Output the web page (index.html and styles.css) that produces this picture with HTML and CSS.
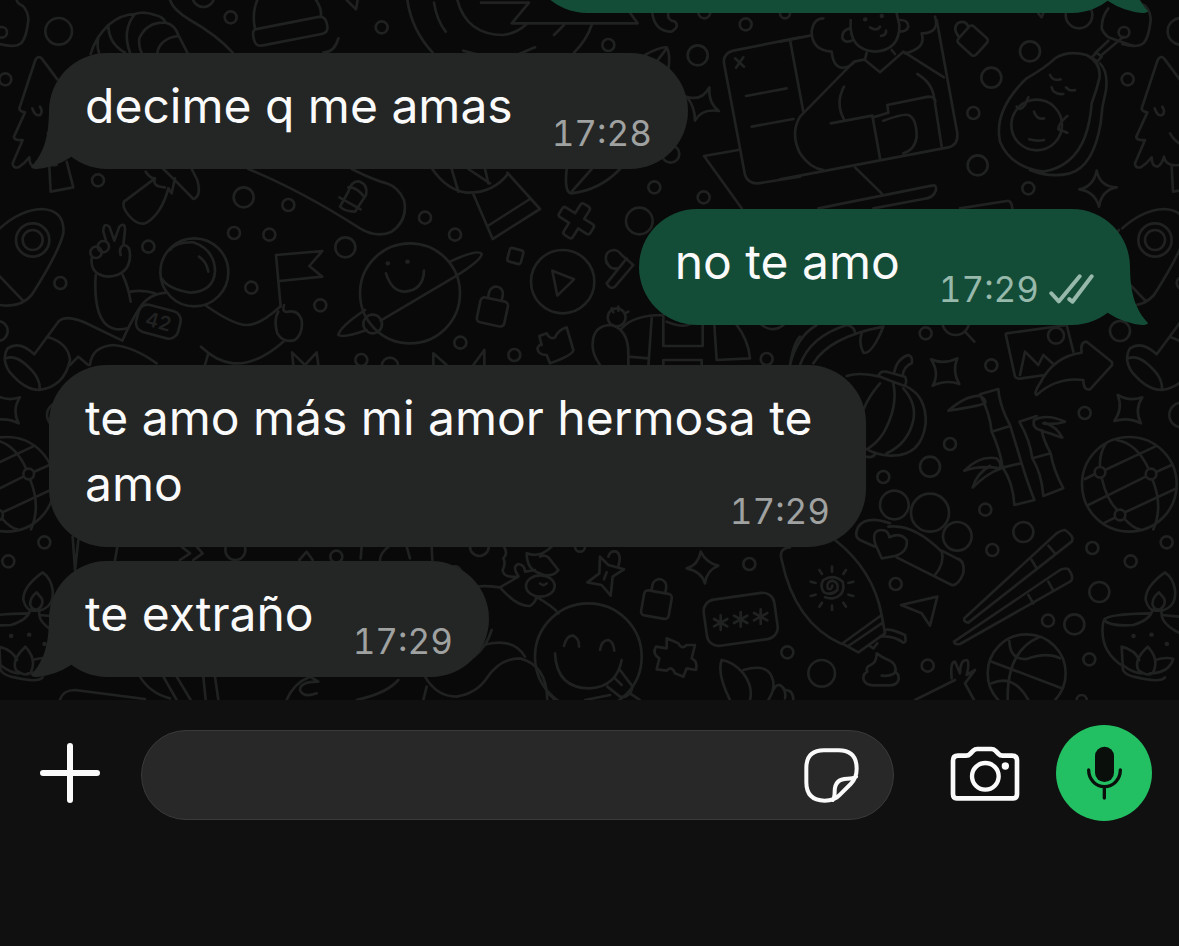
FILE: index.html
```
<!DOCTYPE html>
<html lang="es">
<head>
    <meta charset="UTF-8">
    <meta name="viewport" content="width=device-width, initial-scale=1.0">
    <title>Chat</title>
    <link rel="stylesheet" href="styles.css">
</head>
<body>
    <main class="chat">
        <!-- doodle wallpaper -->
        <svg class="wallpaper" viewBox="0 0 3600 2160" aria-hidden="true">
            <defs>
                <g id="lock">
                    <rect x="-42" y="-34" width="84" height="76" rx="12"/>
                    <path d="M-22 -34V-52A20 20 0 0 1 20 -52V-34"/>
                </g>
                <path id="asterisk" d="M0-22V22M-20-11L20 11M-20 11L20-11"/>
                <path id="tail" d="M18 0C18 30 12 45 0 58Q1 60 6 60Q25 58 40 48L60 20Z"/>
            </defs>

            <!-- this strip repeats on the right edge -->
            <g id="edge">
                <circle cx="5" cy="97" r="16"/>
                <circle cx="176" cy="94" r="40"/>
                <circle cx="16" cy="238" r="18"/>
                <circle cx="181" cy="849" r="18"/>
                <circle cx="-7" cy="993" r="30"/>
                <circle cx="98" cy="720" r="50"/>
                <circle cx="98" cy="720" r="30"/>
                <path d="M50 0Q52 12 68 17Q85 35 85 60Q80 110 65 128Q45 145 0 132"/>
                <path d="M172 238L125 175Q115 165 106 180L58 325Q58 335 75 337L42 410Q42 422 68 420L38 490Q38 505 55 502Q75 490 88 472Q88 500 105 500Q118 495 125 470Q130 500 170 495M143 400Q160 430 185 435M97 325Q105 350 120 345Q130 335 120 320M148 500L152 575L220 562L200 485"/>
                <path d="M0 685Q60 630 125 627Q195 630 190 700Q175 760 95 885Q60 925 0 915M0 830L70 903M-10 690Q-50 730 -20 810L0 830"/>
                <g transform="translate(-1027 1020)">
                    <circle cx="1048" cy="433" r="142"/>
                    <circle cx="960" cy="397" r="16"/>
                    <circle cx="1113" cy="402" r="16"/>
                    <circle cx="1020" cy="525" r="16"/>
                    <circle cx="1160" cy="607" r="18"/>
                    <circle cx="1052" cy="664" r="18"/>
                    <circle cx="1205" cy="225" r="37"/>
                    <path d="M915 417L945 402M975 390L1125 320M925 495L1097 410M1130 395L1175 375M970 550L1005 533M1035 517L1190 445M960 380Q958 340 978 310M1010 300Q1070 310 1105 385M965 413Q980 480 1012 510M1118 420Q1150 500 1120 568M1035 538Q1060 565 1080 568"/>
                    <path d="M1013 165Q1050 185 1087 172Q1062 210 1083 250Q1045 230 1003 243Q1030 205 1013 165Z"/>
                    <path d="M1202-55L1130 43Q1085 0 1050 25Q1030 55 1055 95Q1100 150 1145 150Q1220 140 1237 60Q1232 10 1172-8M1045 55Q1080 40 1130 100Q1150 130 1145 150"/>
                    <path d="M1155 697Q1095 740 1097 780Q1105 810 1125 812H1145Q1190 800 1185 750Q1180 715 1155 697ZM1137 757Q1115 775 1118 795Q1125 812 1140 808Q1160 795 1152 775ZM1117 812Q1110 840 1060 855Q990 860 972 840Q980 822 1110 820M970 845Q955 930 1028 978M1145 815Q1140 850 1200 880M1145 825L1200 830M1028 980Q1025 1000 1060 1010Q1140 1030 1155 1012"/>
                    <path d="M1025 920Q1065 930 1078 960M1025 920L1028 975Q1060 1000 1085 1000M1103 920Q1060 960 1075 990Q1100 1010 1118 1000Q1140 960 1103 920ZM1125 960Q1160 950 1180 957Q1165 1000 1110 1000"/>
                    <path class="dots" d="M1060 888h1M1114 884h1M1160 912h1"/>
                </g>
            </g>
            <use href="#edge" x="3367"/>

            <!-- croissant, hat, astronaut -->
            <g>
                <circle cx="610" cy="-12" r="33"/>
                <circle cx="692" cy="52" r="18"/>
                <circle cx="1145" cy="82" r="18"/>
                <circle cx="294" cy="541" r="18"/>
                <circle cx="731" cy="592" r="30"/>
                <circle cx="865" cy="615" r="18"/>
                <circle cx="702" cy="699" r="18"/>
                <circle cx="808" cy="704" r="18"/>
                <circle cx="445" cy="740" r="18"/>
                <circle cx="754" cy="863" r="18"/>
                <circle cx="961" cy="916" r="18"/>
                <circle cx="1036" cy="742" r="30"/>
                <circle cx="1084" cy="1080" r="18"/>
                <circle cx="1170" cy="1098" r="25"/>
                <path d="M272 162Q285 115 325 75Q365 42 405 42Q430 32 465 45Q490 50 497 68Q525 75 535 105L562 158M295 110Q290 140 297 158M325 75Q325 130 375 158M405 42Q365 90 390 158M497 68Q440 65 418 115Q415 140 425 158M535 108Q480 115 472 158"/>
                <path d="M510 0Q520 30 570 60Q650 105 698 158"/>
                <path d="M765 88Q755 40 772 0M948 0Q965 25 963 48M765 88L960 50Q978 50 982 78Q985 98 965 102L785 137Q765 138 762 118Q755 95 765 88ZM1015 115Q1005 155 970 158M1040 0L1068 28L1073 0"/>
                <path d="M465 535L372 605Q365 620 385 645Q415 680 440 668Q485 640 505 565L515 580L525 535M437 515Q450 535 465 535Q455 560 495 562M490 507Q530 545 580 597Q605 590 592 540L575 507"/>
                <path d="M745 507Q900 570 1080 685Q1130 715 1175 695Q1225 660 1212 600Q1195 562 1160 550Q1120 540 1055 507"/>
                <path d="M1020 620L1045 575Q1055 540 1080 545Q1105 555 1098 585L1065 635Q1035 635 1020 620M1018 592L1082 628M1045 562Q1070 560 1092 590"/>
                <path d="M275 775Q270 825 325 830Q390 825 390 765Q390 735 370 735Q355 745 362 765M343 722L328 680Q310 665 310 695L318 722M343 722L358 680Q375 665 375 690L370 735"/>
                <circle cx="310" cy="740" r="17"/>
                <circle cx="288" cy="757" r="17"/>
                <path d="M287 825Q280 940 320 975Q345 995 382 985M368 825Q385 860 392 905M392 875Q430 868 465 880"/>
                <circle cx="583" cy="817" r="102"/>
                <path d="M485 835Q500 865 570 878Q640 875 645 815Q645 750 580 727Q530 725 510 750M597 770Q620 785 625 815"/>
                <path d="M500 878Q445 880 415 930Q390 970 367 1022L270 975Q200 940 175 965M615 915Q700 975 740 975Q780 975 840 920M850 1025Q770 1095 700 1090Q650 1085 603 1040M625 1060L615 1095"/>
                <g transform="translate(475 965) rotate(15)">
                    <rect x="-65" y="-42" width="130" height="84" rx="28"/>
                    <text x="0" y="21" text-anchor="middle">42</text>
                </g>
                <path d="M842 920L828 765L967 753L928 798L967 830L838 843M835 935Q820 960 832 1000Q850 1030 885 1020Q910 1000 905 960Q895 930 865 935Q845 940 852 915"/>
                <circle cx="1230" cy="880" r="150"/>
                <circle cx="1118" cy="972" r="28"/>
                <path d="M1095 930Q1020 980 1015 1005Q1030 1015 1100 990M1142 962L1365 830Q1445 780 1445 762Q1435 745 1350 785M1158 820Q1175 875 1215 875Q1270 870 1272 812"/>
                <path class="dots" d="M1163 790h1M1222 785h1"/>
                <path d="M880 1095L876 1057L915 1095L950 1057L955 1095"/>
            </g>

            <!-- badge, notebook, play button -->
            <g transform="translate(1200 0)">
                <circle cx="625" cy="135" r="18"/>
                <circle cx="1037" cy="73" r="18"/>
                <circle cx="913" cy="37" r="18"/>
                <circle cx="893" cy="166" r="30"/>
                <circle cx="1155" cy="40" r="15"/>
                <circle cx="812" cy="462" r="26"/>
                <circle cx="763" cy="562" r="18"/>
                <circle cx="911" cy="592" r="18"/>
                <circle cx="75" cy="653" r="18"/>
                <circle cx="165" cy="704" r="18"/>
                <circle cx="718" cy="663" r="40"/>
                <circle cx="181" cy="1028" r="18"/>
                <circle cx="343" cy="1065" r="18"/>
                <circle cx="1100" cy="1077" r="18"/>
                <path d="M22 0Q35 90 98 158M102 8Q110 60 137 95M172 0Q200 105 310 105Q350 100 380 72M243 8H387L335 70H713L690 38M462 105L492 75M575 75Q560 120 522 158M190 152L260 170M405 142L350 165"/>
                <path d="M757 40Q765 95 815 95Q840 80 825 65Q800 60 805 40M735 165Q780 140 800 142Q812 160 805 210M770 185L800 145"/>
                <path d="M928 262Q925 310 957 333Q905 325 885 362Q885 320 860 290Q905 305 928 262Z"/>
                <path d="M1200 112L1000 152Q968 160 972 190L1035 525Q1045 552 1075 550L1200 530M1170 120L1210 335M1038 288L1160 265M1055 380L1180 357M1005 175L1032 200M1030 172L1008 203M1015 450L912 468L1025 625"/>
                <path d="M97 507Q140 570 200 578Q280 580 325 520M155 507L175 575M205 507L270 550M255 507L265 550M220 582L278 717L420 627L322 518M263 678L390 597"/>
                <path d="M500 507Q492 580 515 580Q600 570 660 507M515 575L575 507"/>
                <path transform="translate(529 662) rotate(-58)" d="M-17-15V-47Q-17-55-9-55H9Q17-55 17-47V-15H47Q55-15 55-7V9Q55 17 47 17H17V47Q17 55 9 55H-9Q-17 55-17 47V17H-47Q-55 17-55 9V-7Q-55-15-47-15Z"/>
                <rect x="-21" y="-21" width="42" height="42" rx="8" transform="translate(346 768) rotate(15)"/>
                <circle cx="488" cy="845" r="95"/>
                <path d="M457 812L522 838L472 887Z"/>
                <use href="#lock" transform="translate(278 932) rotate(12)"/>
                <path d="M620 790Q610 755 640 750Q655 750 665 765L700 795L645 860Q630 870 620 850L680 775M620 785Q630 810 650 805"/>
                <path d="M440 1000Q450 1020 465 1012Q475 990 500 982L520 1050Q520 1065 450 1090L440 1065Q415 1065 412 1045Q420 1030 425 1035L418 1008Z"/>
                <circle cx="650" cy="952" r="27"/>
                <path d="M635 925l5 12M655 920v12M685 935l-10 5M600 1095Q575 1060 578 1030Q580 975 635 975Q685 990 685 1060V1095M665 985Q700 945 790 945M755 955L745 1100M790 945V1038H908V970M685 1070L745 1075M790 1100V1080H905V1100M800 965Q850 985 870 972M943 975L950 1080L1050 1075Q1045 1020 1010 975M1085 975Q1120 1000 1150 975M1170 1095Q1180 1030 1200 1010M100 1095V1060L140 1095M220 1095L253 1050V1095"/>
            </g>

            <!-- laptop woman, avocado -->
            <g transform="translate(2340 0)">
                <circle cx="750" cy="154" r="30"/>
                <circle cx="634" cy="233" r="30"/>
                <circle cx="580" cy="339" r="18"/>
                <circle cx="593" cy="496" r="30"/>
                <circle cx="745" cy="565" r="18"/>
                <circle cx="897" cy="45" r="40"/>
                <circle cx="437" cy="1000" r="18"/>
                <circle cx="828" cy="1007" r="24"/>
                <circle cx="527" cy="965" r="40"/>
                <path d="M0 125L90 107M470 60L532 400Q535 435 505 442L0 538"/>
                <path d="M130 55Q100 55 95 95Q95 150 155 155Q160 200 185 203Q205 205 225 185M465 50Q480 100 425 100Q440 145 375 160M212 60Q205 150 285 155Q360 150 358 75L350 40M210 85Q185 90 187 115Q195 130 215 122M360 60Q385 60 385 80Q380 95 360 95M270 82Q290 95 300 80M303 108Q320 105 318 92"/>
                <path class="dots" d="M255 58h1M305 48h1"/>
                <path d="M260 158L255 178L222 185L60 350Q30 400 60 460Q90 505 130 510M335 150L345 162M255 180L300 217L370 155L492 232M192 260Q165 310 192 358M152 370L277 347L300 475M280 352L325 338L322 315L445 290Q470 290 465 310L485 440M412 222Q460 250 463 300M310 362Q370 340 385 345Q410 355 410 410Q405 450 370 460"/>
                <path d="M225 502L305 580M115 625L455 557Q470 552 468 570Q460 595 430 597L280 625M540 625L680 603Q695 600 697 625"/>
                <rect x="-36" y="-34" width="72" height="68" rx="10" transform="translate(578 122) rotate(42)"/>
                <path d="M538 112Q515 85 535 68Q560 60 565 82M775 40L785 52L790 40"/>
                <path d="M985 25Q965 50 965 85Q970 100 985 112L1060 138"/>
                <path d="M985 122L945 160M1030 110L965 165M935 172L950 158L965 170L952 185Z"/>
                <path d="M740 235Q800 200 825 175Q865 150 920 165Q965 190 958 235Q950 270 935 310Q930 370 915 410Q880 500 790 515Q690 500 660 425Q640 330 740 235ZM960 190Q985 215 978 270Q965 320 962 370Q940 500 870 520Q810 535 750 510"/>
                <circle cx="770" cy="375" r="76"/>
                <path d="M810 225Q820 245 842 238M858 262Q870 275 885 270M815 262Q820 285 850 282M710 320Q720 335 735 315L745 292M862 348Q835 370 835 388L862 398M762 335Q770 360 792 355M748 418Q770 425 792 420"/>
                <path d="M950 512Q960 560 1010 562Q965 570 957 620Q945 575 898 568Q940 560 950 512Z"/>
                <path d="M555 995L583 1025M680 1000L860 975L880 1055M30 1095Q50 1010 110 975M60 1095Q90 1010 200 975Q225 980 225 1000M100 1090Q150 1010 310 980Q275 1065 250 1058Q235 1030 245 1000"/>
            </g>

            <!-- lower left corners between bubbles -->
            <g transform="translate(0 1020)">
                <circle cx="706" cy="630" r="30"/>
                <circle cx="1009" cy="650" r="18"/>
                <path d="M210 75L235 50L265 75M270 75Q275 20 340 15Q400 20 470 70M218 590L225 690L235 600M352 620L345 660M545 620L570 640L540 660M590 620L608 640L580 660M898 660L920 635L938 660M1085 620L1082 655M1165 620Q1140 640 1140 660"/>
                <path d="M180 1078Q190 1050 225 1050L435 1077M420 1010Q450 1060 510 1075M490 1010L530 1080M530 1010L572 1080M610 1010L617 1080M645 1010L655 1080M860 1080Q880 1030 930 1010L955 1025Q900 1025 900 1050Q910 1075 950 1060M1070 1080Q1160 1060 1195 1020"/>
            </g>

            <!-- smiley, password card -->
            <g transform="translate(1200 1020)">
                <circle cx="238" cy="620" r="28"/>
                <circle cx="540" cy="620" r="15"/>
                <circle cx="1048" cy="672" r="18"/>
                <path d="M20 620L30 655M95 620L97 660M160 680Q180 675 185 700"/>
                <path d="M312 620Q325 640 310 655Q318 670 308 690Q310 715 355 710L300 742Q240 735 230 742M300 742Q350 800 390 798Q410 785 408 770Q460 800 475 820M355 708Q335 680 355 672Q375 675 375 695L405 690M380 640Q420 655 455 620M380 640Q380 690 420 700Q445 712 465 700L475 690L455 665Q440 640 420 650M420 730Q430 740 440 730"/>
                <ellipse cx="421" cy="738" rx="43" ry="32"/>
                <path d="M600 650L625 675L672 688L638 710L632 767L605 735L562 727L598 700ZM625 650Q630 630 650 635Q665 645 655 680M620 697L612 718"/>
                <use href="#lock" transform="translate(770 790) rotate(10)"/>
                <path d="M902 635Q920 670 955 677Q920 690 915 730Q905 695 860 685Q895 675 902 635Z"/>
                <rect x="-107" y="-70" width="214" height="140" rx="35" transform="translate(1022 838) rotate(-8)"/>
                <use href="#asterisk" x="962" y="848"/>
                <use href="#asterisk" x="1022" y="838"/>
                <use href="#asterisk" x="1082" y="830"/>
                <circle cx="565" cy="950" r="160"/>
                <path d="M492 918Q500 885 520 887Q538 895 537 920M600 930Q605 900 625 900Q640 905 643 932M465 940Q470 1045 570 1045Q650 1040 665 960M622 1040L660 1070Q690 1075 698 1040L660 990M645 1015L665 1035"/>
                <path d="M800 895L835 910Q845 930 860 915L885 915L875 955Q895 965 888 990L860 985L850 1010L825 1000Q815 975 800 992L770 988L778 955Q755 940 768 920L800 925Z"/>
                <path d="M75 1010Q110 1070 170 1070Q230 1060 260 1015Q300 955 360 955Q440 975 442 1080M275 870Q260 920 222 950M250 915Q340 890 375 950M80 1040L70 1080M445 1060L465 1080M555 1080L630 1065M690 1060L720 1080"/>
                <path d="M965 960Q950 1000 990 1080M965 960Q1000 965 1030 1000Q1060 1040 1050 1080M1030 990Q1100 970 1115 1010Q1130 1040 1105 1080M1120 1050Q1135 1020 1155 1050Q1180 1050 1180 1080"/>
            </g>

            <!-- pumpkin, bamboo, sunscreen, chopsticks -->
            <g transform="translate(2340 1020)">
                <circle cx="634" cy="76" r="18"/>
                <circle cx="914" cy="219" r="18"/>
                <circle cx="510" cy="312" r="18"/>
                <circle cx="450" cy="380" r="30"/>
                <circle cx="310" cy="411" r="18"/>
                <circle cx="343" cy="495" r="43"/>
                <circle cx="450" cy="518" r="57"/>
                <circle cx="532" cy="589" r="43"/>
                <circle cx="616" cy="509" r="18"/>
                <circle cx="637" cy="630" r="18"/>
                <circle cx="730" cy="576" r="30"/>
                <circle cx="937" cy="624" r="18"/>
                <circle cx="347" cy="732" r="18"/>
                <circle cx="958" cy="756" r="30"/>
                <circle cx="804" cy="842" r="18"/>
                <circle cx="883" cy="853" r="30"/>
                <circle cx="928" cy="958" r="18"/>
                <circle cx="443" cy="977" r="18"/>
                <circle cx="22" cy="937" r="18"/>
                <circle cx="125" cy="1000" r="40"/>
                <circle cx="905" cy="1080" r="15"/>
                <path d="M200 108Q240 95 300 110M380 140Q440 170 437 250Q425 350 330 347Q290 345 255 325M340 130Q355 200 310 280Q290 310 265 325M370 145Q410 190 400 240Q385 310 320 340M300 130Q265 170 250 210M295 108Q300 92 320 95L375 110Q382 120 375 138Q350 130 295 108M342 100Q350 55 385 45Q400 50 395 70Q370 80 368 108M255 350Q285 355 285 338"/>
                <path d="M453 58Q490 75 532 55Q515 95 538 132Q500 118 458 137Q480 100 453 58Z"/>
                <path d="M600 163L655 147L657 165Q665 210 690 255L725 370Q740 420 763 480L703 495Q700 430 668 382Q660 330 635 275Q630 220 600 163M635 275L690 258M670 382L722 370M505 212Q560 165 600 168Q620 180 615 190Q590 200 505 212M553 392Q600 345 650 355Q665 370 660 385Q600 375 553 392M665 385Q620 400 578 443Q590 400 630 378"/>
                <path d="M770 228L718 245Q750 300 757 355Q785 400 790 468L850 445Q820 390 812 340Q790 300 785 270M757 355L812 340M762 240Q800 220 855 245Q820 255 790 250M762 240Q755 265 785 272Q810 280 847 293Q830 260 795 248"/>
                <path d="M677-18L705 110Q710 118 725 115L795 105M720 105L735 35L775 75L790 45L820 72"/>
                <path d="M770 165Q760 160 780 130Q820 50 905 38Q900 5 920 5L995 65Q1000 75 990 82L930 148Q910 152 910 120Q830 110 770 165Z"/>
                <path d="M330 550Q260 525 235 560Q220 590 240 600L285 620M305 655L285 610Q275 570 305 570Q325 570 328 592Q360 575 380 600Q385 635 345 648ZM325 560Q400 550 485 635M350 652L515 735Q535 738 550 700Q555 660 530 655L485 632Q495 670 465 705"/>
                <path d="M30 622Q-5 625 5 660Q45 850 185 912L305 825Q280 690 165 600M190 912L235 937L315 880L305 825M205 918L305 850M315 870Q330 865 375 885Q380 910 370 908Q340 885 300 890M265 915l15 10l12-15"/>
                <path d="M157 737Q155 752 143 745Q138 725 157 722Q178 727 172 750Q155 768 132 757Q118 738 130 720Q160 700 188 725Q198 765 160 775Q145 776 135 772M156 680v15M156 797v13M118 690l8 12M198 690l-8 12M92 725l15 4M220 725l-15 4M92 768l15-4M220 768l-15-4M118 800l8-12M198 800l-8-12"/>
                <path d="M363 795L472 770L450 857L425 820Z"/>
                <path d="M553 835Q550 845 565 848L875 605Q885 590 855 570Q845 570 830 580ZM755 660L770 685M805 617L825 640M522 905Q525 915 540 912L870 725Q885 715 865 687Q855 683 840 690ZM745 765L760 790M805 725L820 752"/>
                <path d="M290 940Q290 968 272 975Q255 982 262 995Q245 1005 252 1022Q258 1035 280 1036H330Q352 1035 356 1018Q358 1002 345 997Q352 975 330 962Q310 955 290 940ZM305 1007Q345 1010 348 990"/>
                <circle cx="740" cy="1000" r="117"/>
                <path d="M635 965L845 1045M688 903Q690 960 740 957Q800 935 840 955M780 890Q680 930 683 1080M635 1030Q700 1000 745 1080"/>
                <path d="M405 1080L525 1020M515 1015Q510 965 525 965L540 1000Q540 960 560 960Q570 965 560 1005L585 990L555 1030L582 1080M0 1035Q20 1050 15 1075"/>
            </g>
        </svg>

        <div class="messages">
            <div class="bubble out cut">
                <svg class="tail" viewBox="0 0 60 60" aria-hidden="true"><use href="#tail"/></svg>
            </div>
            <div class="bubble in">
                <svg class="tail" viewBox="0 0 60 60" aria-hidden="true"><use href="#tail"/></svg>
                <span>decime q me amas</span>
                <span class="meta"><time>17:28</time></span>
            </div>
            <div class="bubble out">
                <svg class="tail" viewBox="0 0 60 60" aria-hidden="true"><use href="#tail"/></svg>
                <span>no te amo</span>
                <span class="meta">
                    <time>17:29</time>
                    <svg class="ticks" viewBox="0 0 138 92" role="img" aria-label="Entregado">
                        <path d="M7 59L30 84L94 7M62 77L72 85L131 7"/>
                    </svg>
                </span>
            </div>
            <div class="bubble in">
                <span>te amo más mi amor hermosa te amo</span>
                <span class="meta"><time>17:29</time></span>
            </div>
            <div class="bubble in grouped">
                <svg class="tail" viewBox="0 0 60 60" aria-hidden="true"><use href="#tail"/></svg>
                <span>te extraño</span>
                <span class="meta"><time>17:29</time></span>
            </div>
        </div>
    </main>

    <form class="composer">
        <button type="button" class="icon-btn" aria-label="Adjuntar">
            <svg width="60" height="60" viewBox="0 0 60 60"><path d="M30 3V57M3 30H57" stroke-width="6"/></svg>
        </button>
        <div class="field">
            <input type="text" aria-label="Mensaje">
            <button type="button" class="icon-btn" aria-label="Stickers">
                <svg width="55" height="55" viewBox="0 0 165 165">
                    <path stroke-width="12" d="M60 7H104Q158 7 158 62Q158 90 140 108L108 140Q92 158 62 158Q7 158 7 103V60Q7 7 60 7ZM156 86Q150 92 130 92Q92 92 92 130Q92 150 86 156"/>
                </svg>
            </button>
        </div>
        <button type="button" class="icon-btn camera" aria-label="Cámara">
            <svg width="70" height="55" viewBox="0 0 210 165">
                <path stroke-width="14" d="M9 44Q9 29 24 29H48Q56 29 60 24L70 14Q75 9 82 9H124Q131 9 136 14L146 24Q150 29 158 29H186Q201 29 201 44V144Q201 157 190 157H20Q9 157 9 144Z"/>
                <circle cx="106" cy="91" r="40" stroke-width="13"/>
                <circle class="solid" cx="166" cy="60" r="11"/>
            </svg>
        </button>
        <button type="button" class="mic" aria-label="Grabar audio">
            <svg width="35" height="54" viewBox="0 0 105 162">
                <rect x="24" y="2" width="57" height="106" rx="28"/>
                <path d="M5 72A47.500 50 0 0 0 100 72M52 122V156"/>
            </svg>
        </button>
    </form>
</body>
</html>
```

FILE: styles.css
```
* {
    box-sizing: border-box;
}
body {
    margin: 0;
    height: 100vh;
    display: flex;
    flex-direction: column;
    background-color: #101010;
    color: #fafafa;
    font-family: Inter, "Liberation Sans", sans-serif;
}
.chat {
    position: relative;
    flex: 1;
    min-height: 0;
    overflow: hidden;
    background-color: #090909;
    display: flex;
    flex-direction: column;
    justify-content: flex-end;
}
.wallpaper {
    position: absolute;
    top: 0;
    left: 0;
    width: 1200px;
    height: 720px;
    fill: none;
    stroke: #202121;
    stroke-width: 8;
    stroke-linecap: round;
    stroke-linejoin: round;
}
.wallpaper text {
    fill: #202121;
    stroke: none;
    font-size: 60px;
    font-weight: 600;
}
.wallpaper .dots {
    stroke-width: 13;
}
.messages {
    position: relative;
    display: flex;
    flex-direction: column;
    gap: 40px;
    padding: 0 49px 23px;
}
.bubble {
    position: relative;
    display: flow-root;
    max-width: 817px;
    min-height: 116px;
    padding: 20px 36px 30px;
    border-radius: 58px;
    font-size: 48px;
    line-height: 66px;
}
.in {
    align-self: flex-start;
    background-color: #242625;
    fill: #242625;
}
.out {
    align-self: flex-end;
    background-color: #144d37;
    fill: #144d37;
}
.grouped {
    margin-top: -26px;
}
.cut {
    width: 601px;
}
.tail {
    position: absolute;
    left: -18px;
    bottom: 0;
    width: 60px;
    height: 60px;
}
.out .tail {
    left: auto;
    right: -18px;
    transform: scaleX(-1);
}
.meta {
    float: right;
    display: flex;
    align-items: center;
    gap: 10px;
    margin: 48px 0 -6px 39px;
    font-size: 35px;
    line-height: 24px;
    font-variant-numeric: tabular-nums;
    color: #a0a2a1;
}
.out .meta {
    color: #97b9ab;
}
.ticks {
    width: 45px;
    height: 30px;
    margin: -3px 0;
    fill: none;
    stroke: currentColor;
    stroke-width: 12;
    stroke-linecap: round;
    stroke-linejoin: round;
}
.composer {
    display: flex;
    align-items: center;
    padding: 25px 27px 125px 40px;
}
button {
    display: flex;
    align-items: center;
    justify-content: center;
    flex: none;
    padding: 0;
    border: none;
    background: none;
    cursor: pointer;
}
.icon-btn svg {
    fill: none;
    stroke: #fafafa;
    stroke-linecap: round;
    stroke-linejoin: round;
}
.icon-btn .solid {
    fill: #fafafa;
    stroke: none;
}
.field {
    flex: 1;
    min-width: 0;
    height: 90px;
    margin: 4px 56px 0 41px;
    padding: 0 34px 0 36px;
    display: flex;
    align-items: center;
    border: 1px solid #3a3a3a;
    border-radius: 45px;
    background-color: #282828;
}
.field input {
    flex: 1;
    min-width: 0;
    height: 100%;
    border: none;
    outline: none;
    background: none;
    color: inherit;
    font: inherit;
    font-size: 48px;
}
.camera {
    margin-right: 36px;
}
.mic {
    width: 96px;
    height: 96px;
    border-radius: 50%;
    background-color: #22c063;
}
.mic svg {
    fill: #0b0f0c;
}
.mic path {
    fill: none;
    stroke: #0b0f0c;
    stroke-width: 10;
    stroke-linecap: round;
}
```
